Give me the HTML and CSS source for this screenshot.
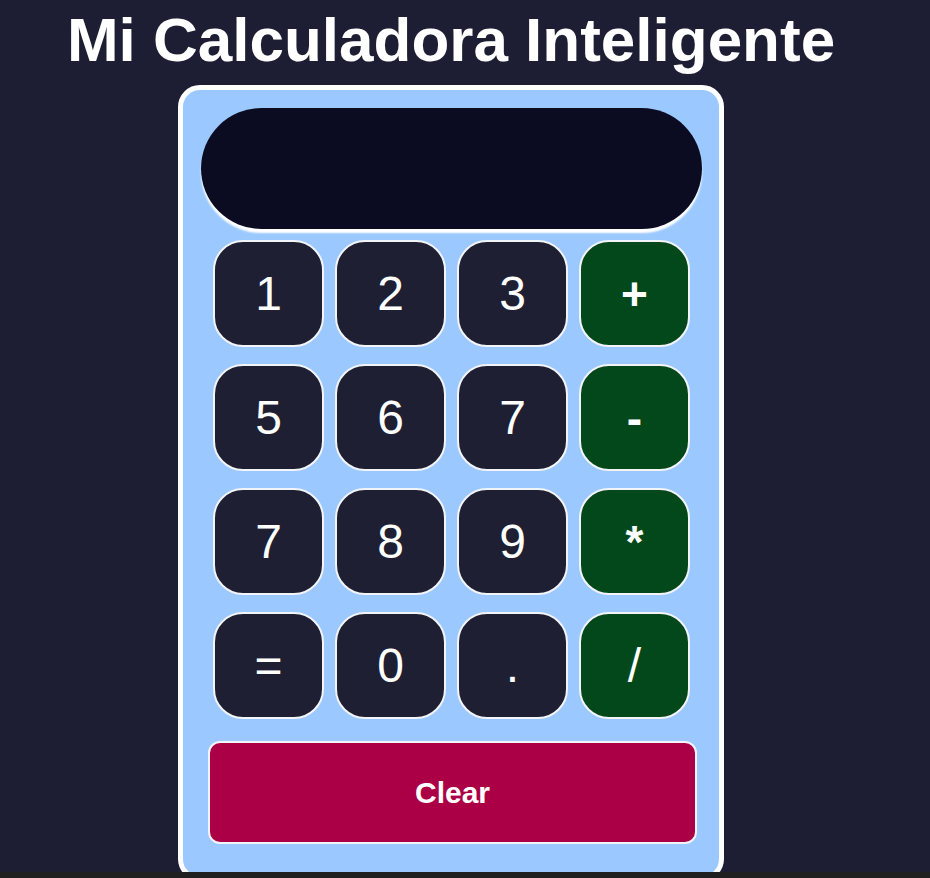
FILE: index.html
```html
<!DOCTYPE html>
<html lang="es">
<head>
<meta charset="utf-8">
<title>Mi Calculadora Inteligente</title>
<link rel="stylesheet" href="styles.css">
</head>
<body>
<div class="page">
  <h1 class="title">Mi Calculadora Inteligente</h1>
  <div class="calculator">
    <div class="display"></div>
    <div class="keys">
      <button class="key">1</button>
      <button class="key">2</button>
      <button class="key">3</button>
      <button class="key op bold">+</button>
      <button class="key">5</button>
      <button class="key">6</button>
      <button class="key">7</button>
      <button class="key op bold">-</button>
      <button class="key">7</button>
      <button class="key">8</button>
      <button class="key">9</button>
      <button class="key op bold">*</button>
      <button class="key">=</button>
      <button class="key">0</button>
      <button class="key">.</button>
      <button class="key op">/</button>
    </div>
    <button class="clear">Clear</button>
  </div>
</div>
<div class="bottom-bar"></div>
</body>
</html>
```

FILE: styles.css
```css
html, body {
  margin: 0;
  padding: 0;
}
body {
  background: #1d1e33;
  font-family: "Liberation Sans", Arial, sans-serif;
  color: #fff;
  overflow: hidden;
  height: 878px;
}
.page {
  width: 902px;
  display: flex;
  flex-direction: column;
  align-items: center;
  padding-top: 4px;
}
.title {
  margin: 0;
  font-size: 62px;
  font-weight: bold;
  line-height: 71px;
  color: #fff;
}
.calculator {
  margin-top: 10px;
  width: 501px;
  background: #9bc9ff;
  border: 5px solid #fff;
  border-radius: 22px;
  padding: 18px 17px 32px 18px;
  display: flex;
  flex-direction: column;
}
.display {
  height: 121px;
  background: #0b0c22;
  border-radius: 61px;
  box-shadow: 0 4px 2px #fff;
}
.keys {
  margin: 11px 12px 0;
  display: grid;
  grid-template-columns: repeat(4, 111px);
  grid-auto-rows: 107px;
  column-gap: 11px;
  row-gap: 17px;
}
.key {
  box-sizing: border-box;
  background: #1e1f33;
  border: 2px solid #f2f4f8;
  border-radius: 30px;
  color: #fff;
  font-family: "Liberation Sans", Arial, sans-serif;
  font-size: 48px;
  font-weight: normal;
  padding: 0;
  display: flex;
  align-items: center;
  justify-content: center;
}
.key.op {
  background: #03481b;
}
.key.bold {
  font-weight: bold;
  font-size: 46px;
}
.clear {
  margin: 22px 5px 0 7px;
  height: 103px;
  box-sizing: border-box;
  background: #ac0046;
  border: 2px solid #f2f4f8;
  border-radius: 12px;
  color: #fff;
  font-family: "Liberation Sans", Arial, sans-serif;
  font-size: 30px;
  font-weight: bold;
}
.bottom-bar {
  position: fixed;
  left: 0;
  right: 0;
  bottom: 0;
  height: 6px;
  background: #202020;
}
```
